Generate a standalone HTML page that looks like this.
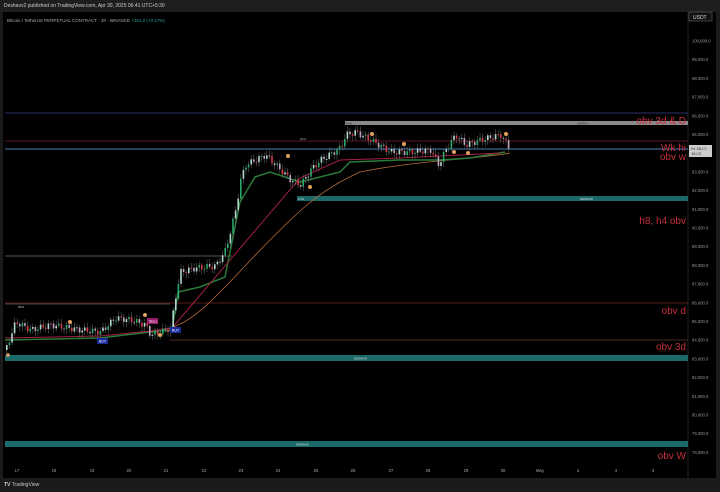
<!DOCTYPE html>
<html><head><meta charset="utf-8"><style>
body{margin:0;width:720px;height:492px;background:#1b1b1b;overflow:hidden;font-family:"Liberation Sans",sans-serif}
.top{position:absolute;left:0;top:0;width:720px;height:12px;background:#1e1e1e;color:#ccc;font-size:5px;line-height:12px;padding-left:4px}
.chart{position:absolute;left:3px;top:12px;width:713px;height:466px;background:#000}
.bot{position:absolute;left:0;top:478px;width:720px;height:14px;background:#1b1b1b;color:#ccc;font-size:5px;line-height:14px;padding-left:4px}
</style></head><body>
<div class="top">Deshavv2 published on TradingView.com, Apr 30, 2025 06:41 UTC+5:30</div>
<div class="chart"></div>
<svg width="720" height="492" style="position:absolute;left:0;top:0" font-family="Liberation Sans,sans-serif">
<text x="7" y="22" fill="#aaa" font-size="4.5">Bitcoin / TetherUS PERPETUAL CONTRACT · 2h · BINANCE <tspan fill="#26a69a">+161.2 (+0.17%)</tspan></text>
<line x1="688" y1="12" x2="688" y2="478" stroke="#222"/>
<rect x="689" y="12" width="23" height="9" fill="#111" stroke="#666" stroke-width="0.6"/>
<text x="693" y="19" fill="#ddd" font-size="5">USDT</text>
<g fill="#999" font-size="4.2" id="ax"></g>
<line x1="5" y1="113" x2="688" y2="113" stroke="#27306a" stroke-width="1"/>
<rect x="345" y="121" width="343" height="4" fill="#8a8a8a"/>
<text x="346" y="124.5" fill="#222" font-size="3">FVG</text><text x="577" y="124.5" fill="#222" font-size="3">SUPPLY</text>
<line x1="5" y1="141" x2="688" y2="141" stroke="#5a1a26"/>
<text x="300" y="140" fill="#aaa" font-size="3">90%</text>
<line x1="5" y1="149" x2="688" y2="149" stroke="#4a7fb0" stroke-width="1"/>
<rect x="297" y="196" width="391" height="5" fill="#1b6a6a"/>
<text x="298" y="200" fill="#ddd" font-size="3">FVG</text><text x="580" y="200" fill="#ddd" font-size="3">DEMAND</text>
<line x1="5" y1="256" x2="232" y2="256" stroke="#555"/>
<line x1="5" y1="303" x2="688" y2="303" stroke="#5a1a1a"/>
<line x1="5" y1="304" x2="170" y2="304" stroke="#888" stroke-width="0.6"/>
<text x="18" y="308" fill="#ccc" font-size="3">90%</text>
<line x1="170" y1="340" x2="688" y2="340" stroke="#4a2a20"/>
<rect x="5" y="355" width="683" height="6" fill="#1b6a6a"/>
<text x="354" y="359.5" fill="#ddd" font-size="3">DEMAND</text>
<rect x="5" y="441" width="683" height="6" fill="#1b6a6a"/>
<text x="296" y="445.5" fill="#ddd" font-size="3">DEMAND</text>
<g fill="#c8303c" font-size="10" text-anchor="end">
<text x="686" y="124">obv 3d &amp; D</text>
<text x="686" y="151">Wk hi</text>
<text x="686" y="160">obv w</text>
<text x="686" y="224">h8, h4 obv</text>
<text x="686" y="314">obv d</text>
<text x="686" y="350">obv 3d</text>
<text x="686" y="459">obv W</text>
</g>
<rect x="689" y="145" width="23" height="12" fill="#ccc"/>
<text x="691" y="150" fill="#333" font-size="4">94,361.2</text><text x="691" y="155" fill="#333" font-size="4">18:23</text>
<path d="M170,328 C200,320 230,280 270,240 C300,210 320,190 360,172 C420,160 470,160 510,153" stroke="#b86a3a" stroke-width="0.8" fill="none"/>
<path d="M5,340 L100,338 L150,332 L172,330 L178,292 L200,287 L225,277 L240,202 L255,177 L270,172 L300,182 L340,172 L350,162 L400,160 L440,160 L470,158 L505,152" stroke="#2a7a3a" stroke-width="1.5" fill="none"/>
<path d="M5,338 L100,336 L150,331 L172,328 L300,178 L340,160 L400,158 L500,153" stroke="#a02040" stroke-width="1" fill="none"/>
<g id="cd"></g>
<g fill="#1a2a9a"><rect x="97" y="338" width="11" height="6"/><rect x="170" y="327" width="11" height="6"/></g>
<rect x="147" y="318" width="11" height="6" fill="#9a1a6a"/>
<g fill="#fff" font-size="3.5"><text x="99" y="342.5">BUY</text><text x="172" y="331.5">BUY</text><text x="149" y="322.5">SELL</text></g>
<g fill="#e0a060"><circle cx="70" cy="322" r="2"/><circle cx="145" cy="315" r="2"/><circle cx="160" cy="335" r="2"/><circle cx="288" cy="156" r="2"/><circle cx="310" cy="187" r="2"/><circle cx="372" cy="134" r="2"/><circle cx="404" cy="144" r="2"/><circle cx="454" cy="152" r="2"/><circle cx="468" cy="153" r="2"/><circle cx="506" cy="134" r="2"/><circle cx="8" cy="355" r="1.8"/></g>
<g fill="#aaa" font-size="4.2" text-anchor="middle" id="dt"></g>
</svg>
<div class="bot"><b>TV</b> TradingView</div>
<script>
(function(){
var ns="http://www.w3.org/2000/svg";
function t(g,x,y,s){var e=document.createElementNS(ns,"text");e.setAttribute("x",x);e.setAttribute("y",y);e.textContent=s;document.getElementById(g).appendChild(e);}
for(var p=100;p>=78;p--){if(p==94)continue;t("ax",692,41+(100-p)*18.7+1.5,p+",000.0");}
var d=[["17",17],["18",54],["19",92],["20",129],["21",166],["22",204],["23",241],["24",278],["25",316],["26",353],["27",391],["28",428],["29",466],["30",503],["May",540],["2",578],["3",616],["4",653]];
d.forEach(function(a){t("dt",a[1],472,a[0]);});
var P=[[5,350],[15,322],[30,330],[50,325],[80,330],[100,332],[115,318],[130,320],[145,325],[150,335],[160,332],[170,328],[176,290],[180,272],[195,268],[215,266],[225,250],[235,210],[240,180],[245,165],[255,160],[265,155],[275,165],[290,180],[300,185],[310,170],[320,160],[340,148],[345,135],[355,132],[370,140],[390,152],[410,152],[430,150],[438,165],[445,150],[455,135],[465,145],[480,140],[500,135],[510,150]];
function Y(x){for(var i=1;i<P.length;i++){if(x<=P[i][0]){var a=P[i-1],b=P[i];return a[1]+(b[1]-a[1])*(x-a[0])/(b[0]-a[0]);}}return 150;}
var g=document.getElementById("cd"),prev=Y(5);
for(var x=6;x<=510;x+=2.6){var y=Y(x)+Math.sin(x*1.7)*3;var up=y<prev;var tp=Math.min(y,prev),h=Math.max(1,Math.abs(y-prev));
var w=document.createElementNS(ns,"line");w.setAttribute("x1",x+0.8);w.setAttribute("x2",x+0.8);w.setAttribute("y1",tp-2-Math.abs(Math.sin(x))*3);w.setAttribute("y2",tp+h+2+Math.abs(Math.cos(x))*3);w.setAttribute("stroke","#888");w.setAttribute("stroke-width","0.4");g.appendChild(w);
var r=document.createElementNS(ns,"rect");r.setAttribute("x",x);r.setAttribute("y",tp);r.setAttribute("width",1.6);r.setAttribute("height",h);
var c=up?(x%7<3.5?"#2aa86a":"#b0d8d0"):(x%5<2.5?"#d83a4a":"#c0a0c0");r.setAttribute("fill",c);g.appendChild(r);prev=y;}
})();
</script>
</body></html>
